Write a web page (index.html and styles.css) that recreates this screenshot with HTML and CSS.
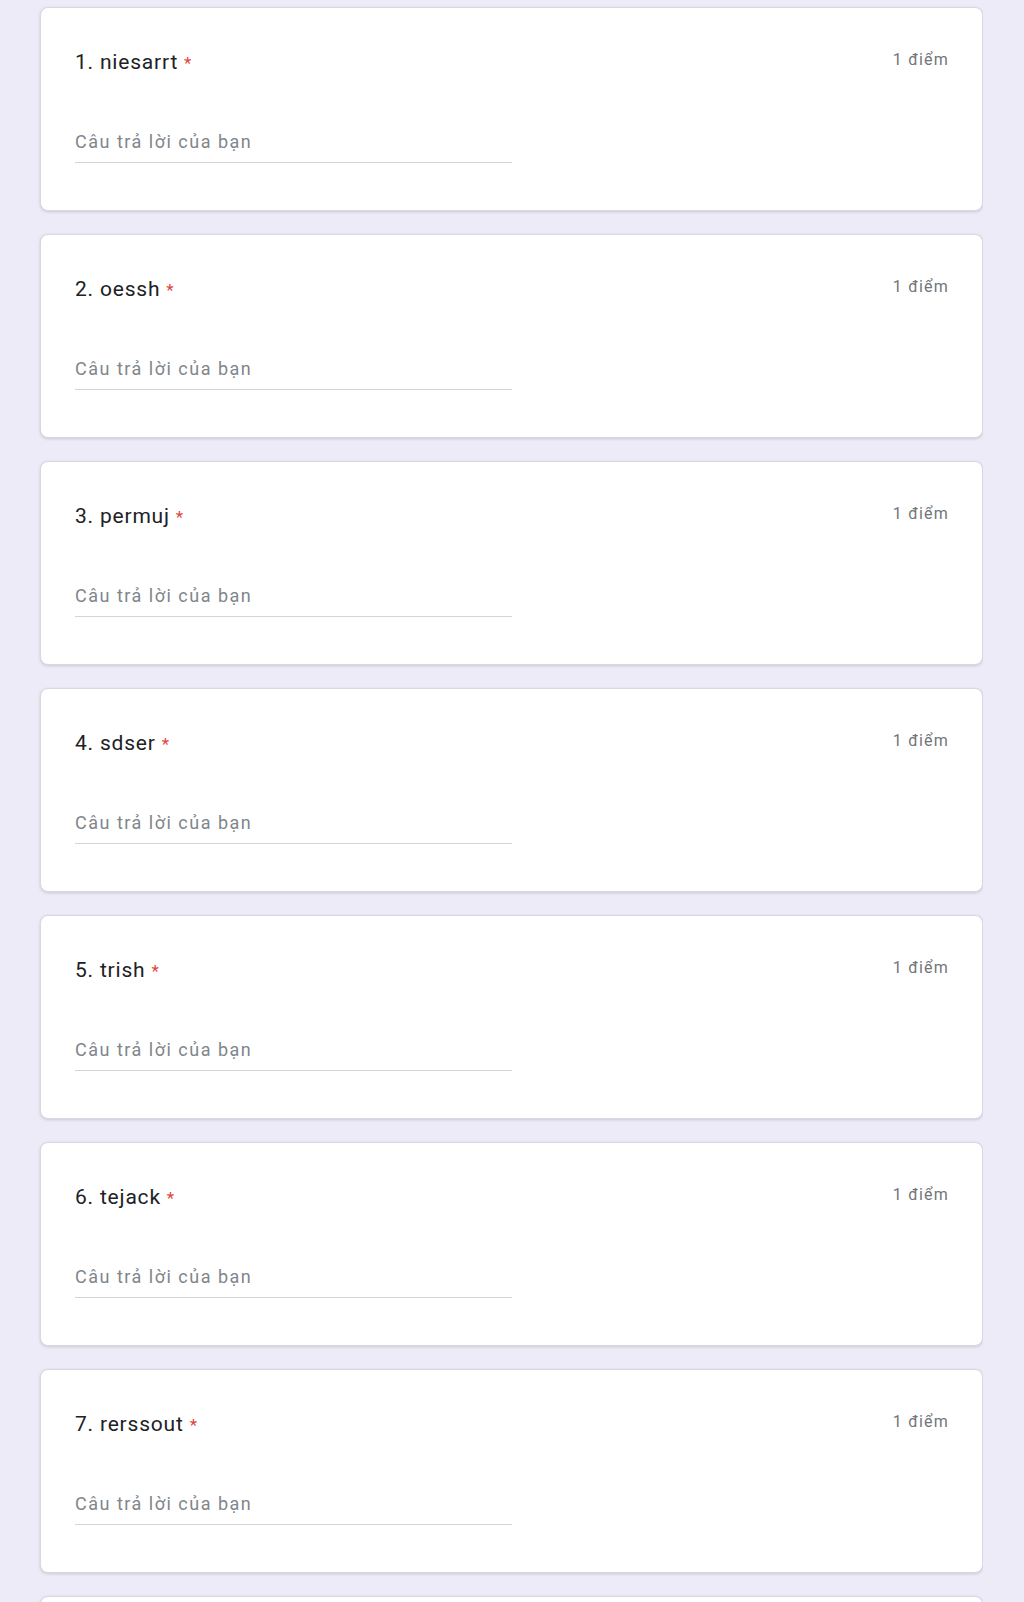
FILE: index.html
```html
<!DOCTYPE html>
<html lang="vi">
<head>
<meta charset="utf-8">
<title>Form</title>
<link rel="stylesheet" href="styles.css">
</head>
<body>
<main class="form">
  <section class="card">
    <div class="head"><div class="q">1. niesarrt <span class="req">*</span></div><div class="pts">1 điểm</div></div>
    <div class="answer">Câu trả lời của bạn</div>
  </section>
  <section class="card">
    <div class="head"><div class="q">2. oessh <span class="req">*</span></div><div class="pts">1 điểm</div></div>
    <div class="answer">Câu trả lời của bạn</div>
  </section>
  <section class="card">
    <div class="head"><div class="q">3. permuj <span class="req">*</span></div><div class="pts">1 điểm</div></div>
    <div class="answer">Câu trả lời của bạn</div>
  </section>
  <section class="card">
    <div class="head"><div class="q">4. sdser <span class="req">*</span></div><div class="pts">1 điểm</div></div>
    <div class="answer">Câu trả lời của bạn</div>
  </section>
  <section class="card">
    <div class="head"><div class="q">5. trish <span class="req">*</span></div><div class="pts">1 điểm</div></div>
    <div class="answer">Câu trả lời của bạn</div>
  </section>
  <section class="card">
    <div class="head"><div class="q">6. tejack <span class="req">*</span></div><div class="pts">1 điểm</div></div>
    <div class="answer">Câu trả lời của bạn</div>
  </section>
  <section class="card">
    <div class="head"><div class="q">7. rerssout <span class="req">*</span></div><div class="pts">1 điểm</div></div>
    <div class="answer">Câu trả lời của bạn</div>
  </section>
  <section class="card card-partial"></section>
</main>
</body>
</html>
```

FILE: styles.css
```css
html, body {
  margin: 0;
  padding: 0;
  background: #edebf8;
}
body {
  font-family: Roboto, "Noto Sans", Arial, sans-serif;
}
.form {
  box-sizing: border-box;
  display: flex;
  flex-direction: column;
  gap: 23px;
  padding: 7px 0 0 40px;
  width: 983px;
  height: 1602px;
  overflow: hidden;
}
.card {
  box-sizing: border-box;
  height: 204px;
  flex: none;
  background: #fff;
  border: 1px solid #d9d8e2;
  border-radius: 8px;
  box-shadow: 0 1px 3px rgba(60, 64, 67, 0.2);
  padding: 42px 33px 0 34px;
}
.head {
  display: flex;
  justify-content: space-between;
  align-items: flex-start;
}
.q {
  font-size: 21px;
  line-height: 24px;
  color: #202124;
  letter-spacing: 0.8px;
}
.req {
  color: #e0443a;
  font-size: 17px;
}
.pts {
  font-size: 16px;
  line-height: 24px;
  color: #70757a;
  letter-spacing: 1.2px;
  margin-top: -2px;
}
.answer {
  margin-top: 54px;
  width: 437px;
  font-size: 18px;
  line-height: 26px;
  color: #80868b;
  letter-spacing: 1.5px;
  border-bottom: 1px solid #d5d5d9;
  padding-bottom: 7px;
}
```
